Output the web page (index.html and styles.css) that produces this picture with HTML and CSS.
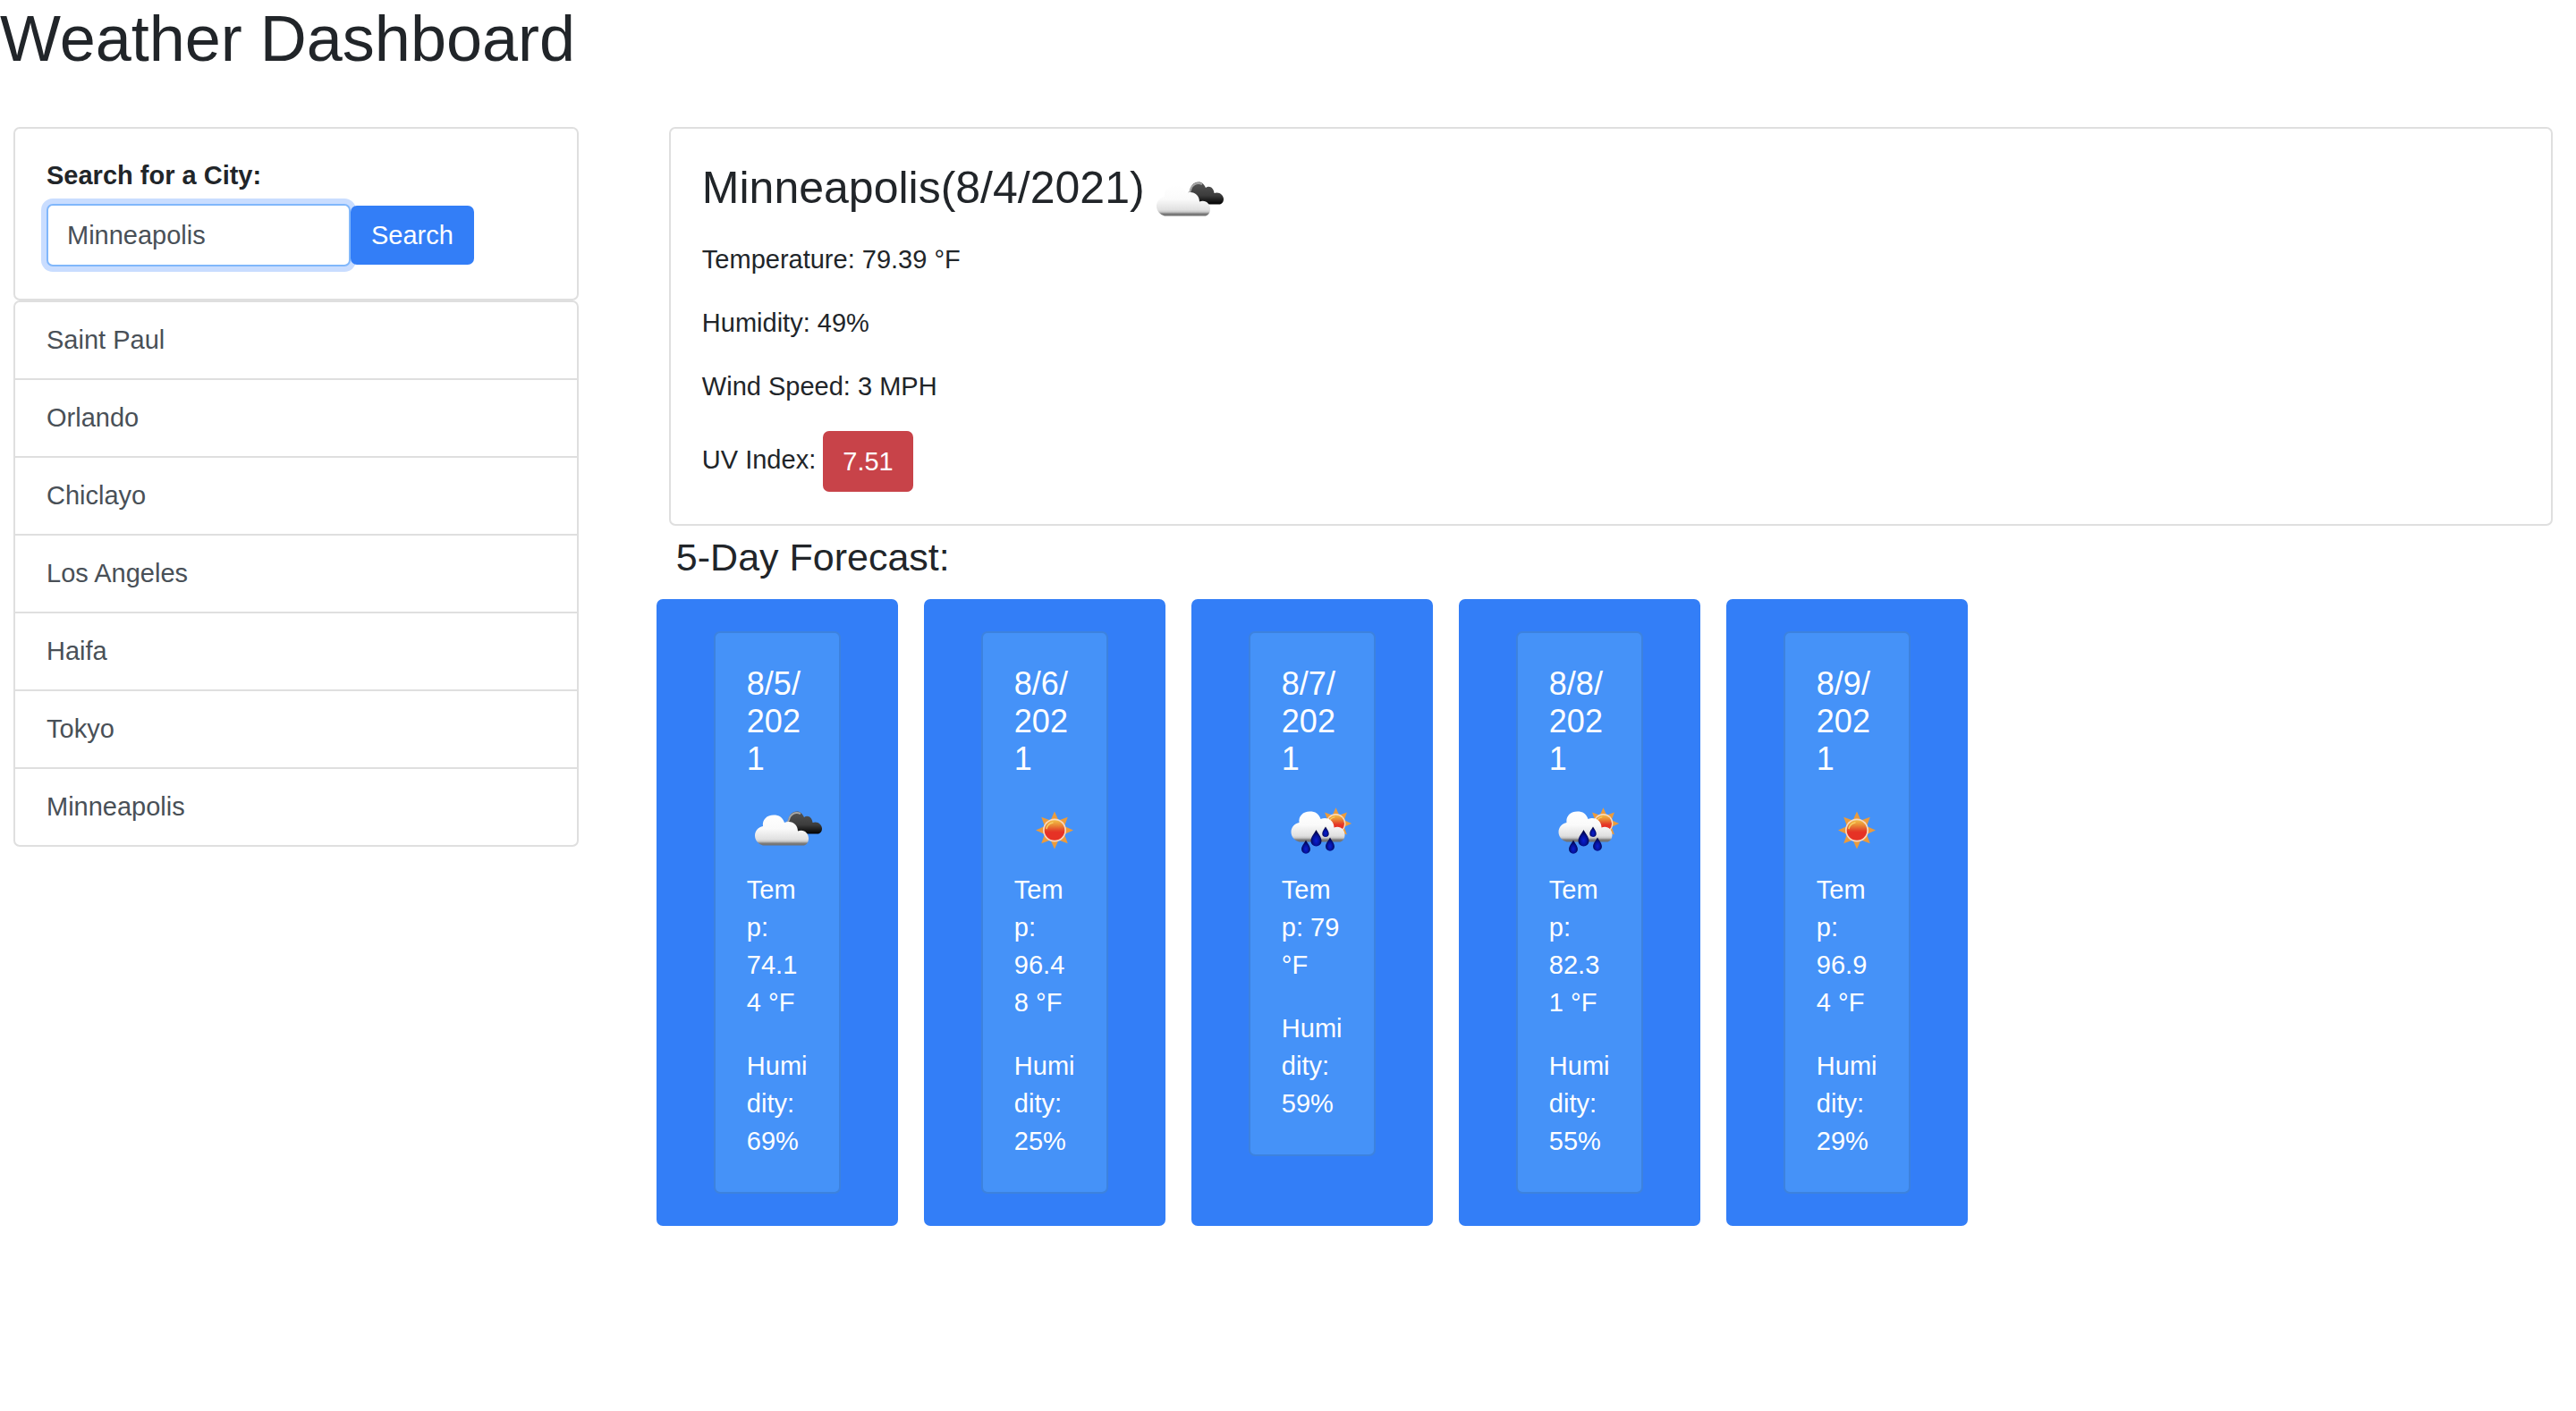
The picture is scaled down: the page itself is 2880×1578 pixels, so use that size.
FILE: index.html
```html
<!DOCTYPE html>
<html lang="en">
<head>
  <meta charset="utf-8">
  <title>Weather Dashboard</title>
  <link rel="stylesheet" href="styles.css">
</head>
<body>
  <svg class="sprite" aria-hidden="true">
    <defs>
      <linearGradient id="cloud-fill" x1="0" y1="0" x2="0" y2="1">
        <stop offset="0" stop-color="#ffffff"/>
        <stop offset="0.45" stop-color="#fafafa"/>
        <stop offset="0.8" stop-color="#e0e0e0"/>
        <stop offset="0.87" stop-color="#c8c8c8"/>
        <stop offset="0.93" stop-color="#7c7c7c"/>
        <stop offset="1" stop-color="#707070"/>
      </linearGradient>
      <linearGradient id="dark-fill" x1="0" y1="0" x2="0" y2="1">
        <stop offset="0" stop-color="#555555"/>
        <stop offset="0.6" stop-color="#3c3c3c"/>
        <stop offset="1" stop-color="#000000"/>
      </linearGradient>
      <linearGradient id="sun-fill" x1="0" y1="0" x2="0" y2="1">
        <stop offset="0" stop-color="#f3bd45"/>
        <stop offset="0.25" stop-color="#ea8a35"/>
        <stop offset="0.5" stop-color="#e4462a"/>
        <stop offset="0.6" stop-color="#e63225"/>
        <stop offset="1" stop-color="#e63225"/>
      </linearGradient>
      <radialGradient id="drop-fill" cx="0.5" cy="0.65" r="0.55">
        <stop offset="0" stop-color="#0a1fd0"/>
        <stop offset="0.5" stop-color="#0412a0"/>
        <stop offset="1" stop-color="#010540"/>
      </radialGradient>
      <path id="drop" fill="url(#drop-fill)" d="M0-9C2-5 6-1 6 3.500A6 6 0 0 1-6 3.500C-6-1-2-5 0-9Z"/>
      <g id="sun-shape">
        <path fill="#eb9b3c" d="M0-21L4.500-11L14.800-14.800L11-4.500L21 0L11 4.500L14.800 14.800L4.500 11L0 21L-4.500 11L-14.800 14.800L-11 4.500L-21 0L-11-4.500L-14.800-14.800L-4.500-11Z"/>
        <circle r="13" fill="#f8d9c0"/>
        <circle r="11.300" fill="url(#sun-fill)"/>
        <path fill="none" stroke="#f8cf62" stroke-width="1.500" stroke-linecap="round" d="M-9-2A9 9 0 0 1-2-8.500"/>
      </g>
      <path id="cloud-shape" d="M18 61.500C13 60 9 56 9 50.500C9 45 13 41 18 40C17 33 22 27.500 30 27.500C36 27.500 40 30 42 36C50 33 57 38 57 45.500C64 43 69 48 69 53.500C69 58 67 60.500 64 61.500Z"/>
      <symbol id="clouds" viewBox="0 0 90 90">
        <path fill="url(#dark-fill)" d="M46 36C46 29 50 23.500 56 23.500C60 23.500 62 26 64 30C68 27 73 30 73.500 36C79 34 84 38 84 42.500C84 46 82 48.500 79 48.500H55Z"/>
        <path fill="none" stroke="#a6a6a6" stroke-width="2" d="M44 36Q46 36 47 33C48 27 54 23 60 26"/>
        <use href="#cloud-shape" fill="url(#cloud-fill)"/>
      </symbol>
      <symbol id="sun" viewBox="0 0 90 90">
        <use href="#sun-shape" transform="translate(45 44.500)"/>
      </symbol>
      <symbol id="rain" viewBox="0 0 90 90">
        <use href="#sun-shape" transform="translate(60.500 37) scale(.84)"/>
        <use href="#cloud-shape" fill="url(#cloud-fill)" transform="translate(1.500 -4)"/>
        <use href="#drop" transform="translate(27 63) scale(.82)"/>
        <use href="#drop" transform="translate(38.500 53)"/>
        <use href="#drop" transform="translate(49 46) scale(.62)"/>
        <use href="#drop" transform="translate(54 60) scale(.82)"/>
      </symbol>
    </defs>
  </svg>

  <header>
    <h1 class="title">Weather Dashboard</h1>
  </header>

  <main class="dashboard">
    <aside>
      <form class="card search">
        <label class="search-label" for="city">Search for a City:</label>
        <div class="search-row">
          <input class="search-input" id="city" type="text" value="Minneapolis">
          <button class="search-button" type="button">Search</button>
        </div>
      </form>
      <ul class="history">
        <li><button class="history-item" type="button">Saint Paul</button></li>
        <li><button class="history-item" type="button">Orlando</button></li>
        <li><button class="history-item" type="button">Chiclayo</button></li>
        <li><button class="history-item" type="button">Los Angeles</button></li>
        <li><button class="history-item" type="button">Haifa</button></li>
        <li><button class="history-item" type="button">Tokyo</button></li>
        <li><button class="history-item" type="button">Minneapolis</button></li>
      </ul>
    </aside>

    <div>
      <section class="card current">
        <h2 class="city">Minneapolis(8/4/2021)<svg class="icon" role="img" aria-label="Broken clouds"><use href="#clouds"/></svg></h2>
        <p>Temperature: 79.39 °F</p>
        <p>Humidity: 49%</p>
        <p>Wind Speed: 3 MPH</p>
        <p>UV Index: <span class="uv">7.51</span></p>
      </section>

      <h3 class="forecast-title">5-Day Forecast:</h3>
      <div class="forecast">
        <article class="day">
          <div class="day-card">
            <h4 class="date">8/5/2021</h4>
            <svg class="icon" role="img" aria-label="Broken clouds"><use href="#clouds"/></svg>
            <p>Temp: 74.14 °F</p>
            <p>Humidity: 69%</p>
          </div>
        </article>
        <article class="day">
          <div class="day-card">
            <h4 class="date">8/6/2021</h4>
            <svg class="icon" role="img" aria-label="Clear sky"><use href="#sun"/></svg>
            <p>Temp: 96.48 °F</p>
            <p>Humidity: 25%</p>
          </div>
        </article>
        <article class="day">
          <div class="day-card">
            <h4 class="date">8/7/2021</h4>
            <svg class="icon" role="img" aria-label="Rain"><use href="#rain"/></svg>
            <p>Temp: 79 °F</p>
            <p>Humidity: 59%</p>
          </div>
        </article>
        <article class="day">
          <div class="day-card">
            <h4 class="date">8/8/2021</h4>
            <svg class="icon" role="img" aria-label="Rain"><use href="#rain"/></svg>
            <p>Temp: 82.31 °F</p>
            <p>Humidity: 55%</p>
          </div>
        </article>
        <article class="day">
          <div class="day-card">
            <h4 class="date">8/9/2021</h4>
            <svg class="icon" role="img" aria-label="Clear sky"><use href="#sun"/></svg>
            <p>Temp: 96.94 °F</p>
            <p>Humidity: 29%</p>
          </div>
        </article>
      </div>
    </div>
  </main>
</body>
</html>
```
FILE: styles.css
```css
*,
*::before,
*::after {
  box-sizing: border-box;
}

body {
  margin: 0;
  background: #fff;
  color: #212529;
  font-family: "Liberation Sans", Arial, sans-serif;
  font-size: 29px;
  line-height: 42px;
}

h1,
h2,
h3,
h4,
p,
ul {
  margin: 0;
  padding: 0;
  font-weight: 400;
}

input,
button {
  font: inherit;
}

p + p {
  margin-top: 29px;
}

.sprite {
  position: absolute;
  width: 0;
  height: 0;
}

.icon {
  display: block;
  flex: none;
  width: 90px;
  height: 90px;
}

.title {
  margin-bottom: 56px;
  font-size: 72px;
  line-height: 86px;
}

.dashboard {
  display: grid;
  grid-template-columns: 3fr 10fr;
  align-items: start;
  column-gap: 101px;
  padding: 0 26px 0 15px;
}

.card {
  padding: 36px 35px;
  border: 2px solid #dfdfdf;
  border-radius: 7px;
}

/* Search form */
.search {
  padding-top: 31px;
}

.search-label {
  display: block;
  margin-bottom: 11px;
  font-weight: 700;
}

.search-row {
  display: flex;
  align-items: center;
}

.search-input {
  width: 340px;
  min-width: 0;
  height: 70px;
  padding: 0 21px;
  border: 2px solid #80b7fb;
  border-radius: 7px;
  background: #fff;
  box-shadow: 0 0 0 6px #c9ddff;
  color: #495057;
  outline: 0;
}

.search-button {
  position: relative;
  flex: none;
  height: 66px;
  padding: 0 23px;
  border: 0;
  border-radius: 7px;
  background: #337ef7;
  color: #fff;
}

/* Earlier searches */
.history {
  border: 2px solid #dfdfdf;
  border-radius: 7px;
  list-style: none;
}

.history li + li {
  border-top: 2px solid #dfdfdf;
}

.history-item {
  display: block;
  width: 100%;
  padding: 21px 35px 22px;
  border: 0;
  background: none;
  color: #495057;
  text-align: left;
}

/* Current conditions */
.city {
  display: flex;
  height: 60px;
  margin-bottom: 29px;
  font-size: 50px;
  line-height: 60px;
}

.city .icon {
  margin-left: 4px;
}

.uv {
  display: inline-block;
  padding: 13px 22px;
  border-radius: 7px;
  background: #c84349;
  color: #fff;
  vertical-align: middle;
}

/* Forecast */
.forecast-title {
  margin: 10px 0 22px 8px;
  font-size: 43px;
  line-height: 50px;
}

.forecast {
  display: flex;
  gap: 29px;
  margin-left: -14px;
}

.day {
  display: flex;
  align-items: flex-start;
  padding: 36px 64px;
  border-radius: 7px;
  background: #337ef7;
}

.day-card {
  width: 142px;
  padding: 36px 35px;
  border: 2px solid #3d82de;
  border-radius: 7px;
  background: #4592f8;
  color: #fff;
  overflow-wrap: anywhere;
}

.date {
  margin-bottom: 14px;
  font-size: 36px;
}
```
